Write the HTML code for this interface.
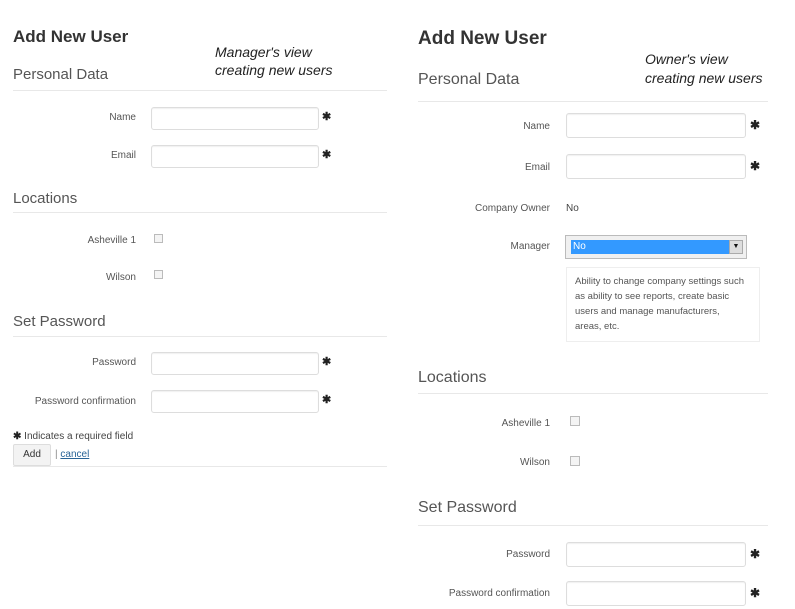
<!DOCTYPE html>
<html><head><meta charset="utf-8"><style>
body{margin:0;width:795px;height:609px;background:#fff;position:relative;overflow:hidden;font-family:"Liberation Sans",Arial,sans-serif;color:#444}
div,span{position:absolute;white-space:nowrap}
.t{font-weight:bold;color:#333}
.h{color:#555}
.n{font-style:italic;color:#222}
.l{text-align:right;color:#555}
.i{border:1px solid #ddd;border-radius:3px;background:#fff;box-shadow:inset 0 1px 1px #f0f0f0}
.hr{height:1px;background:#e8e8e8}
.s{color:#222;font-weight:bold}
.c{border:1px solid #bbb;background:#f4f4f4}
</style></head><body>
<!-- LEFT -->
<div class="t" style="left:13px;top:27px;font-size:17px">Add New User</div>
<div class="n" style="left:215px;top:43px;font-size:14px;line-height:18px">Manager's view<br>creating new users</div>
<div class="h" style="left:13px;top:66px;font-size:15px">Personal Data</div>
<div class="hr" style="left:13px;top:90px;width:374px"></div>
<div class="l" style="left:40px;width:96px;top:112px;font-size:10px">Name</div>
<div class="i" style="left:151px;top:107px;width:166px;height:21px"></div>
<div class="s" style="left:322px;top:110px;font-size:11px">✱</div>
<div class="l" style="left:40px;width:96px;top:150px;font-size:10px">Email</div>
<div class="i" style="left:151px;top:145px;width:166px;height:21px"></div>
<div class="s" style="left:322px;top:148px;font-size:11px">✱</div>
<div class="h" style="left:13px;top:190px;font-size:15px">Locations</div>
<div class="hr" style="left:13px;top:212px;width:374px"></div>
<div class="l" style="left:30px;width:106px;top:235px;font-size:10px">Asheville 1</div>
<div class="c" style="left:154px;top:234px;width:7px;height:7px"></div>
<div class="l" style="left:30px;width:106px;top:272px;font-size:10px">Wilson</div>
<div class="c" style="left:154px;top:270px;width:7px;height:7px"></div>
<div class="h" style="left:13px;top:313px;font-size:15px">Set Password</div>
<div class="hr" style="left:13px;top:336px;width:374px"></div>
<div class="l" style="left:20px;width:116px;top:357px;font-size:10px">Password</div>
<div class="i" style="left:151px;top:352px;width:166px;height:21px"></div>
<div class="s" style="left:322px;top:355px;font-size:11px">✱</div>
<div class="l" style="left:10px;width:126px;top:396px;font-size:10px">Password confirmation</div>
<div class="i" style="left:151px;top:390px;width:166px;height:21px"></div>
<div class="s" style="left:322px;top:393px;font-size:11px">✱</div>
<div style="left:13px;top:431px;font-size:10px;color:#444"><b style="color:#222">✱</b> Indicates a required field</div>
<div style="left:13px;top:444px;width:36px;height:20px;background:#f3f3f3;border:1px solid #ddd;border-radius:2px;font-size:10px;line-height:20px;text-align:center;color:#333">Add</div>
<div style="left:55px;top:449px;font-size:10px;color:#888">| <span style="position:static;color:#2a6496;text-decoration:underline">cancel</span></div>
<div class="hr" style="left:13px;top:466px;width:374px"></div>

<!-- RIGHT -->
<div class="t" style="left:418px;top:28px;font-size:19px">Add New User</div>
<div class="n" style="left:645px;top:50px;font-size:14px;line-height:19px">Owner's view<br>creating new users</div>
<div class="h" style="left:418px;top:71px;font-size:16px">Personal Data</div>
<div class="hr" style="left:418px;top:101px;width:350px"></div>
<div class="l" style="left:450px;width:100px;top:121px;font-size:10px">Name</div>
<div class="i" style="left:566px;top:113px;width:178px;height:23px"></div>
<div class="s" style="left:750px;top:118px;font-size:12px">✱</div>
<div class="l" style="left:450px;width:100px;top:162px;font-size:10px">Email</div>
<div class="i" style="left:566px;top:154px;width:178px;height:23px"></div>
<div class="s" style="left:750px;top:159px;font-size:12px">✱</div>
<div class="l" style="left:450px;width:100px;top:203px;font-size:10px">Company Owner</div>
<div style="left:566px;top:203px;font-size:10px;color:#444">No</div>
<div class="l" style="left:450px;width:100px;top:241px;font-size:10px">Manager</div>
<div style="left:565px;top:235px;width:180px;height:22px;border:1px solid #bbb;background:#f0f0f0"></div>
<div style="left:571px;top:240px;width:157px;height:14px;background:#3399ff;color:#fff;font-size:10px;line-height:14px;padding-left:2px">No</div>
<div style="left:729px;top:240px;width:12px;height:12px;background:#ddd;border:1px solid #aaa;font-size:7px;line-height:12px;text-align:center;color:#111">▼</div>
<div style="left:566px;top:267px;width:194px;height:75px;box-sizing:border-box;border:1px solid #eee;padding:6px 0 0 8px;font-size:9.5px;line-height:15px;color:#555">Ability to change company settings such<br>as ability to see reports, create basic<br>users and manage manufacturers,<br>areas, etc.</div>
<div class="h" style="left:418px;top:369px;font-size:16px">Locations</div>
<div class="hr" style="left:418px;top:393px;width:350px"></div>
<div class="l" style="left:450px;width:100px;top:418px;font-size:10px">Asheville 1</div>
<div class="c" style="left:570px;top:416px;width:8px;height:8px"></div>
<div class="l" style="left:450px;width:100px;top:457px;font-size:10px">Wilson</div>
<div class="c" style="left:570px;top:456px;width:8px;height:8px"></div>
<div class="h" style="left:418px;top:499px;font-size:16px">Set Password</div>
<div class="hr" style="left:418px;top:525px;width:350px"></div>
<div class="l" style="left:430px;width:120px;top:549px;font-size:10px">Password</div>
<div class="i" style="left:566px;top:542px;width:178px;height:23px"></div>
<div class="s" style="left:750px;top:547px;font-size:12px">✱</div>
<div class="l" style="left:410px;width:140px;top:588px;font-size:10px">Password confirmation</div>
<div class="i" style="left:566px;top:581px;width:178px;height:23px"></div>
<div class="s" style="left:750px;top:586px;font-size:12px">✱</div>
</body></html>
